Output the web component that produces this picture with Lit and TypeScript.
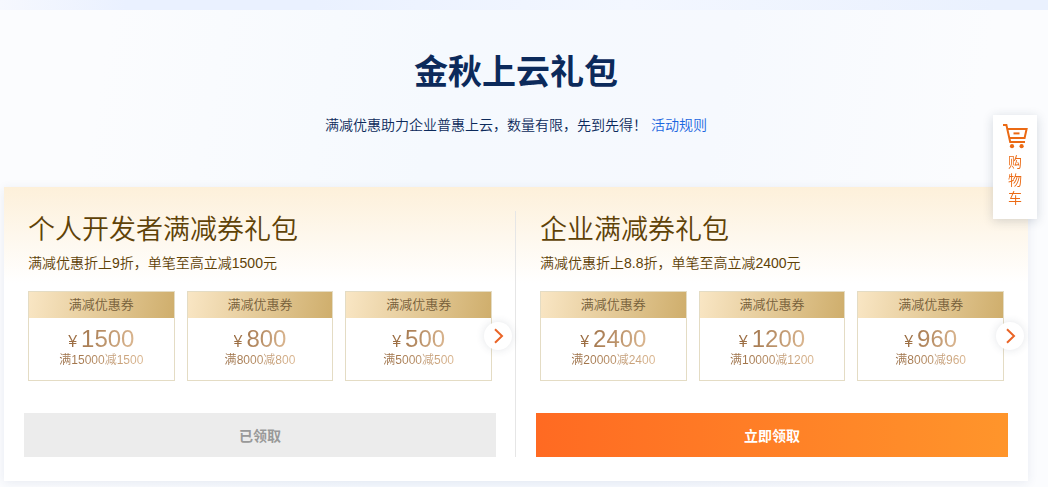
import { LitElement, html, css } from "lit";
import { customElement, property } from "lit/decorators.js";

interface Coupon {
  amount: number;
  threshold: number;
}

interface Pack {
  title: string;
  desc: string;
  coupons: Coupon[];
  claimed: boolean;
}

const PACKS: Pack[] = [
  {
    title: "个人开发者满减券礼包",
    desc: "满减优惠折上9折，单笔至高立减1500元",
    coupons: [
      { amount: 1500, threshold: 15000 },
      { amount: 800, threshold: 8000 },
      { amount: 500, threshold: 5000 },
    ],
    claimed: true,
  },
  {
    title: "企业满减券礼包",
    desc: "满减优惠折上8.8折，单笔至高立减2400元",
    coupons: [
      { amount: 2400, threshold: 20000 },
      { amount: 1200, threshold: 10000 },
      { amount: 960, threshold: 8000 },
    ],
    claimed: false,
  },
];

@customElement("coupon-card")
class CouponCard extends LitElement {
  @property({ attribute: false }) coupon!: Coupon;

  static styles = css`
    :host {
      display: block;
      box-sizing: border-box;
      min-width: 0;
      border: 1px solid #e4dcc4;
      background: #fff;
      text-align: center;
    }
    .head {
      background: linear-gradient(100deg, #f9e6c4, #cfae6c);
      color: #77603a;
      font-size: 13px;
      line-height: 26px;
    }
    .body {
      padding: 8px 0 11px;
    }
    .price,
    .rule {
      width: fit-content;
      margin: 0 auto;
      background: linear-gradient(100deg, #94653a, #dcb892);
      -webkit-background-clip: text;
      background-clip: text;
      color: transparent;
    }
    .price {
      display: flex;
      align-items: baseline;
      gap: 4px;
      font-size: 24px;
      line-height: 26px;
    }
    .unit {
      font-size: 16px;
      font-weight: 500;
      line-height: 16px;
    }
    .rule {
      font-size: 12px;
      line-height: 17px;
    }
  `;

  render() {
    const { amount, threshold } = this.coupon;
    return html`
      <div class="head">满减优惠券</div>
      <div class="body">
        <div class="price"><span class="unit">¥</span><span>${amount}</span></div>
        <div class="rule">满${threshold}减${amount}</div>
      </div>
    `;
  }
}

@customElement("gift-pack")
class GiftPack extends LitElement {
  @property({ attribute: false }) pack!: Pack;

  static styles = css`
    :host {
      display: block;
      box-sizing: border-box;
      min-width: 0;
      padding: 0 20px;
    }
    .info {
      padding: 0 4px;
    }
    h2 {
      margin: 0;
      color: #5f4207;
      font-size: 27px;
      font-weight: 350;
      line-height: 38px;
    }
    p {
      margin: 0;
      color: #5f4207;
      font-size: 14px;
      line-height: 28px;
    }
    .coupons {
      position: relative;
      display: grid;
      grid-template-columns: repeat(3, 1fr);
      gap: 12px;
      margin-top: 14px;
    }
    .next {
      position: absolute;
      right: -20px;
      top: 50%;
      width: 28px;
      height: 28px;
      margin-top: -14px;
      padding: 0;
      display: grid;
      place-items: center;
      border: 0;
      border-radius: 50%;
      background: #fff;
      box-shadow: 0 0 8px rgba(60, 70, 90, 0.14);
      cursor: pointer;
    }
    .claim {
      display: block;
      width: 100%;
      height: 44px;
      margin-top: 32px;
      padding: 0;
      border: 0;
      background: linear-gradient(90deg, #ff6a22, #ff952b);
      color: #fff;
      font-family: inherit;
      font-size: 14px;
      font-weight: 700;
      cursor: pointer;
    }
    .claim:disabled {
      background: #ececec;
      color: #999;
      cursor: default;
    }
  `;

  render() {
    const { title, desc, coupons, claimed } = this.pack;
    return html`
      <div class="info">
        <h2>${title}</h2>
        <p>${desc}</p>
        <div class="coupons">
          ${coupons.map((c) => html`<coupon-card .coupon=${c}></coupon-card>`)}
          <button class="next" aria-label="下一页">
            <svg width="16" height="16" viewBox="0 0 16 16" fill="none" stroke="#ea6426" stroke-width="2">
              <path d="M5 1.2 L12 8 L5 14.8" />
            </svg>
          </button>
        </div>
      </div>
      <button class="claim" ?disabled=${claimed}>${claimed ? "已领取" : "立即领取"}</button>
    `;
  }
}

@customElement("app-root")
class AppRoot extends LitElement {
  static styles = css`
    :host {
      display: block;
      min-height: 100vh;
      box-sizing: border-box;
      font-family: "Liberation Sans", "Noto Sans CJK SC", sans-serif;
      font-weight: 350;
      background: linear-gradient(100deg, #fbfcfe 10%, #f5f9fe 40%, #f6f9fe 65%, #fbfcfe 88%);
    }
    .strip {
      height: 10px;
      background: linear-gradient(90deg, #f6f8fe, #eaf1ff 12%, #eaf1ff 30%, #f3f7ff 60%, #eaf1fe 95%);
    }
    main {
      padding: 37px 20px 6px 4px;
    }
    header {
      text-align: center;
      color: #0c2a5b;
    }
    h1 {
      margin: 0;
      font-size: 34px;
      font-weight: 700;
      line-height: 50px;
    }
    .lead {
      margin: 18px 0 0;
      font-size: 14px;
      line-height: 20px;
    }
    .lead a {
      color: #1a66e0;
      text-decoration: none;
    }
    .panel {
      display: grid;
      grid-template-columns: 1fr 1fr;
      margin-top: 52px;
      padding: 24px 0;
      background: linear-gradient(#fdf0da, #fff 96px);
      box-shadow: 0 2px 10px rgba(40, 70, 120, 0.09);
    }
    gift-pack:first-child {
      border-right: 1px solid #e6e6e6;
      padding-right: 19px;
    }
    .cart {
      position: fixed;
      top: 115px;
      right: 11px;
      width: 44px;
      padding: 8px 0 12px;
      display: flex;
      flex-direction: column;
      align-items: center;
      background: #fff;
      box-shadow: 0 2px 10px rgba(30, 50, 80, 0.18);
      color: #eb6a14;
      font-size: 14px;
      line-height: 18px;
      text-decoration: none;
    }
    .cart span {
      width: 14px;
      margin-top: 3px;
    }
  `;

  render() {
    return html`
      <div class="strip"></div>
      <main>
        <header>
          <h1>金秋上云礼包</h1>
          <p class="lead">满减优惠助力企业普惠上云，数量有限，先到先得！ <a href="#rules">活动规则</a></p>
        </header>
        <section class="panel">${PACKS.map((p) => html`<gift-pack .pack=${p}></gift-pack>`)}</section>
      </main>
      <a class="cart" href="#cart">
        <svg width="26" height="27" viewBox="0 0 26 27" fill="none" stroke="currentColor" stroke-width="2">
          <path d="M1 2h3.4l3.8 17H23" />
          <path d="M5.2 6H24.6l-2 9H7.4" />
          <path d="M11.5 10.4h6" />
          <circle cx="10" cy="23.2" r="2.1" fill="currentColor" stroke="none" />
          <circle cx="19.6" cy="23.2" r="2.1" fill="currentColor" stroke="none" />
        </svg>
        <span>购物车</span>
      </a>
    `;
  }
}
